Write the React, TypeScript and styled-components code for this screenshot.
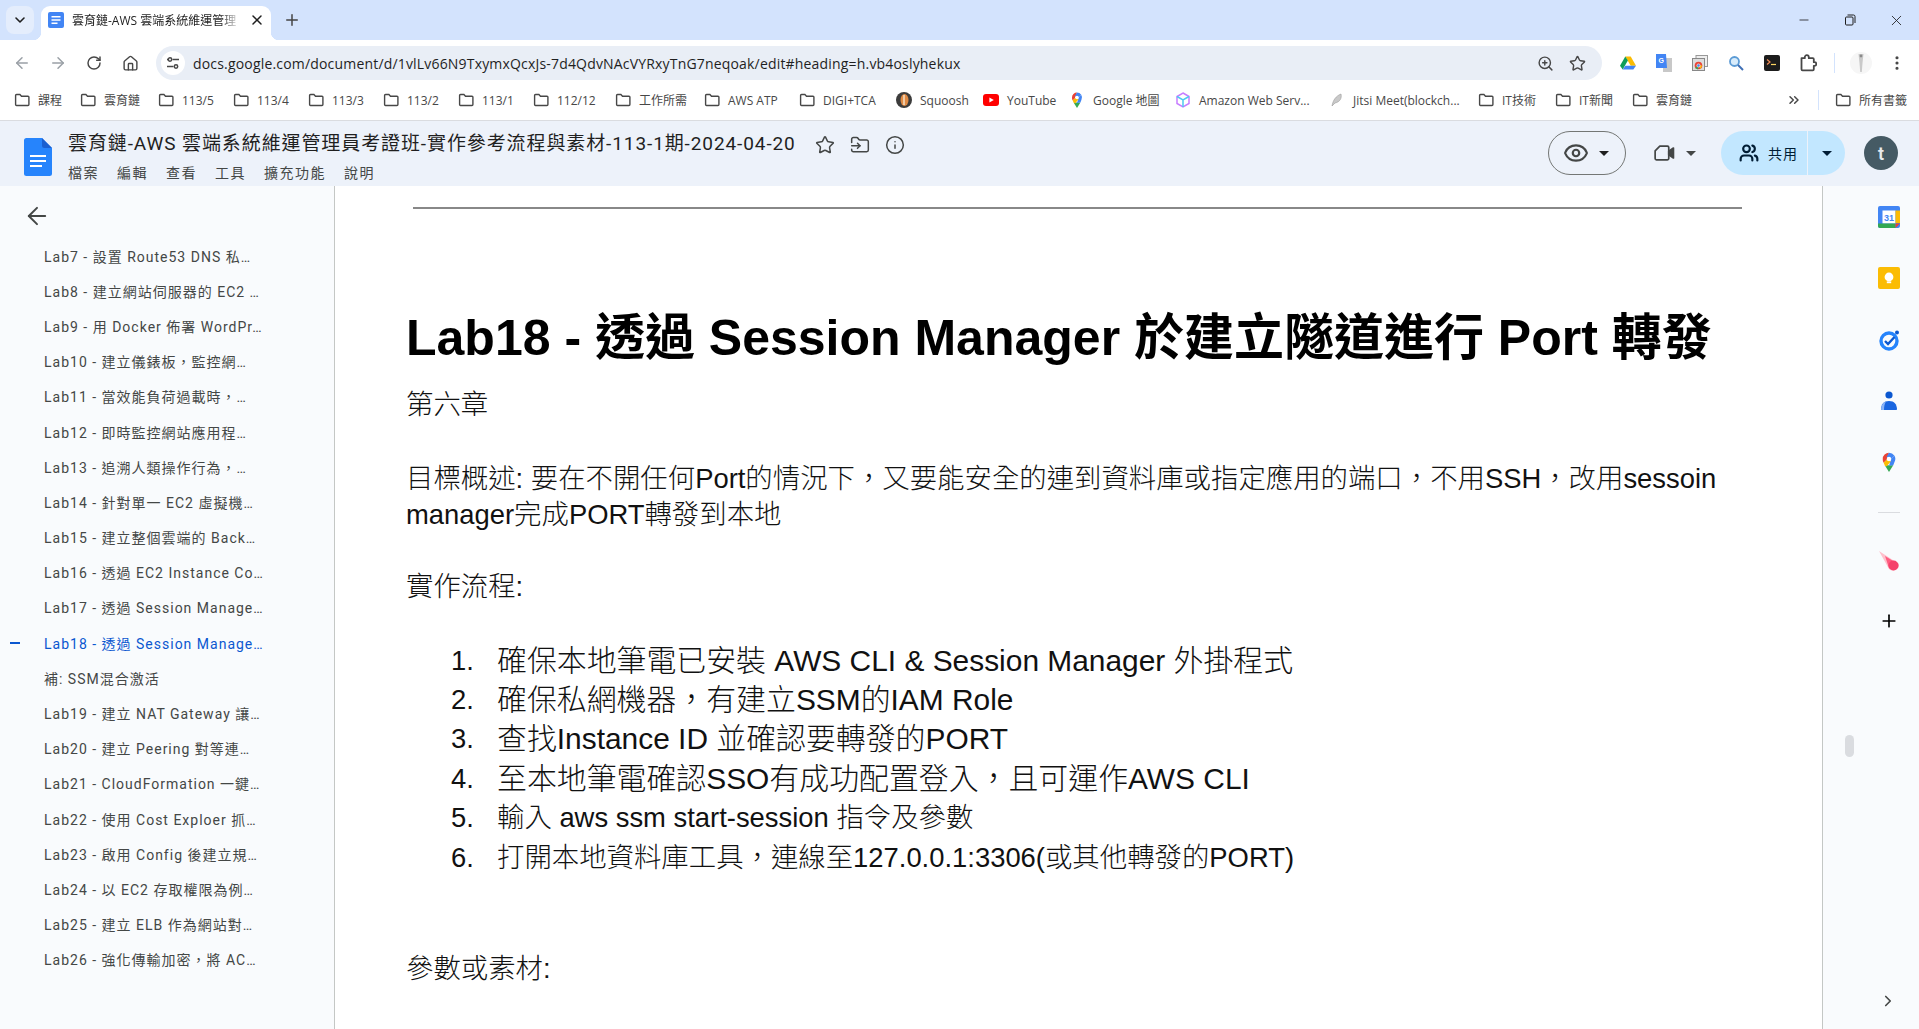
import React from "react";
import styled, { createGlobalStyle } from "styled-components";
import { ArrowLeft, ArrowRight, RotateCw, Home, Star, ZoomIn, Info, X, Plus, ChevronDown, ChevronRight, Eye, Users, Minus, EllipsisVertical, ChevronsRight, FolderInput } from "lucide-react";

const CJK = `"Noto Sans CJK TC"`;
const Global = createGlobalStyle`
  html, body { margin: 0; padding: 0; background: #fff; }
  body { font-family: "Open Sans", ${CJK}, sans-serif; color: #1f1f1f; overflow: hidden; }
  * { box-sizing: border-box; }
`;

const Page = styled.div`width: 1919px; height: 1029px; display: flex; flex-direction: column; overflow: hidden;`;
const TabStrip = styled.div`height: 40px; background: #d3e3fd; display: flex; align-items: flex-end; padding-left: 6px;`;
const TabList = styled.div`width: 28px; height: 28px; margin-bottom: 6px; background: #e4edfc; border-radius: 8px; display: flex; align-items: center; justify-content: center; color: #1f1f1f;`;
const Tab = styled.div`
  position: relative; width: 230px; height: 34px; margin-left: 7px; background: #fff; border-radius: 9px 9px 0 0;
  display: flex; align-items: center; padding: 0 6px 6px 7px; gap: 8px; font-size: 12px; white-space: nowrap;
  &::before, &::after { content: ""; position: absolute; bottom: 0; width: 8px; height: 8px; }
  &::before { left: -8px; background: radial-gradient(circle at 0 0, transparent 8px, #fff 8.5px); }
  &::after { right: -8px; background: radial-gradient(circle at 100% 0, transparent 8px, #fff 8.5px); }
`;
const TabTitle = styled.span`flex: 1; overflow: hidden; color: #1f1f1f; mask-image: linear-gradient(90deg, #000 88%, transparent);`;
const NewTab = styled.div`margin: 0 0 8px 9px; width: 24px; height: 24px; display: flex; align-items: center; justify-content: center; color: #444;`;
const WindowBtns = styled.div`margin-left: auto; display: flex; height: 40px; align-items: center;`;
const WinBtn = styled.div`width: 46px; height: 40px; display: flex; align-items: center; justify-content: center; color: #1f1f1f;`;

const Toolbar = styled.div`height: 40px; background: #fff; display: flex; align-items: flex-end; padding: 0 2px 0 4px; border-radius: 8px 8px 0 0;`;
const NavRow = styled.div`display: flex; height: 34px; align-items: center;`;
const NavBtn = styled.div<{ $dim?: boolean }>`width: 36px; height: 34px; display: flex; align-items: center; justify-content: center; color: ${p => (p.$dim ? "#9aa0a6" : "#474747")};`;
const Omnibox = styled.div`width: 1446px; height: 34px; margin-left: 8px; background: #e9eef6; border-radius: 17px; display: flex; align-items: center; padding: 0 9px 0 5px;`;
const SiteBtn = styled.div`width: 24px; height: 24px; border-radius: 50%; background: #fff; display: flex; align-items: center; justify-content: center; flex: none;`;
const Url = styled.div`flex: 1; margin-left: 8px; font-size: 14px; color: #1f1f1f; white-space: nowrap; font-family: "Open Sans", sans-serif; letter-spacing: 0.18px;`;
const OmniIcon = styled.div`width: 32px; display: flex; justify-content: center; color: #474747;`;
const Exts = styled.div`display: flex; height: 34px; align-items: center; margin-left: 8px;`;
const Ext = styled.div`width: 36px; height: 34px; display: flex; align-items: center; justify-content: center; color: #474747;`;
const ToolSep = styled.div`width: 1px; height: 20px; background: #d3e3fd; margin: 0 8px;`;

const Bookmarks = styled.div`height: 41px; background: #fff; border-bottom: 1px solid #dadce0; display: flex; align-items: center; padding: 0 12px 0 14px; font-size: 12px; color: #474747; white-space: nowrap;`;
const Mark = styled.div<{ $w: number }>`width: ${p => p.$w}px; display: flex; align-items: center; gap: 8px; flex: none; overflow: hidden;`;
const More = styled.div`margin-left: auto; display: flex; align-items: center; color: #474747;`;
const MarkSep = styled.div`width: 1px; height: 20px; background: #d3e3fd; margin: 0 16px;`;

const DocHeader = styled.div`height: 65px; background: #edf2fa; display: flex; align-items: flex-start; padding-left: 24px;`;
const DocLogo = styled.div`width: 28px; margin-top: 17px; flex: none;`;
const TitleCol = styled.div`margin-left: 16px; display: flex; flex-direction: column;`;
const TitleRow = styled.div`display: flex; align-items: center; height: 44px;`;
const DocTitle = styled.div`font-size: 19px; color: #1f1f1f; white-space: nowrap; width: 726px; letter-spacing: 0.9px; font-family: Roboto, ${CJK}, sans-serif; margin-top: -3px;`;
const TitleIcons = styled.div`display: flex; gap: 15px; margin-left: 21px; color: #444746; margin-top: 3px;`;
const Menu = styled.div`display: flex; gap: 18px; font-size: 14px; color: #444746; margin-top: -3px;`;
const MenuItem = styled.span`white-space: nowrap; letter-spacing: 1.5px;`;
const HeaderRight = styled.div`margin-left: auto; display: flex; align-items: center; height: 44px; margin-top: 10px;`;
const ModeBtn = styled.div`width: 78px; height: 44px; border: 1px solid #747775; border-radius: 22px; display: flex; align-items: center; gap: 10px; padding-left: 14px; color: #444746;`;
const Caret = styled.span<{ $c?: string }>`width: 0; height: 0; border-left: 5px solid transparent; border-right: 5px solid transparent; border-top: 5px solid ${p => p.$c || "#1f1f1f"};`;
const MeetBtn = styled.div`display: flex; align-items: center; gap: 10px; margin-left: 27px; width: 43px; color: #444746;`;
const ShareGroup = styled.div`display: flex; height: 44px; margin-left: 25px; background: #c2e7ff; border-radius: 22px; overflow: hidden; width: 124px;`;
const SharePart = styled.div`width: 87px; display: flex; align-items: center; gap: 9px; padding-left: 18px; font-size: 14px; color: #001d35; border-right: 1px solid #edf2fa; letter-spacing: 1px; white-space: nowrap;`;
const ShareCaret = styled.div`flex: 1; display: flex; align-items: center; justify-content: center;`;
const Avatar = styled.div`width: 34px; height: 34px; margin: 0 21px 0 19px; border-radius: 50%; background: #455a64; color: #e8eaed; display: flex; align-items: center; justify-content: center; font-size: 18px; font-weight: 600; font-family: Roboto, sans-serif;`;

const Main = styled.div`flex: 1; display: flex; min-height: 0;`;
const Sidebar = styled.div`width: 335px; flex: none; background: #f9fbfd; border-right: 1px solid #c4c7c5; padding-top: 16px;`;
const BackArrow = styled.div`margin-left: 23px; height: 28px; color: #444746; margin-bottom: 8px;`;
const OutlineList = styled.div`display: flex; flex-direction: column;`;
const OutlineItem = styled.div<{ $active?: boolean }>`
  height: 35.2px; display: flex; align-items: center; padding-left: 10px; font-family: Roboto, ${CJK}, sans-serif; font-size: 14px; letter-spacing: 1px; white-space: nowrap;
  color: ${p => (p.$active ? "#0b57d0" : "#444746")};
`;
const Marker = styled.span<{ $on?: boolean }>`width: 10px; height: 2px; margin-right: 24px; background: ${p => (p.$on ? "#0b57d0" : "transparent")};`;

const DocArea = styled.div`flex: 1; background: #fff; padding-left: 71px; min-width: 0;`;
const Rule = styled.div`width: 1329px; height: 2px; margin: 21px 0 0 7px; background: #888;`;
const Heading = styled.h1`margin: 98px 0 0 0; font: 700 50px/62px "Liberation Sans", ${CJK}, sans-serif; color: #000; white-space: nowrap;`;
const Para = styled.p<{ $top?: number }>`margin: ${p => p.$top ?? 0}px 0 0; width: 1340px; font: 300 27.4px/36px "Liberation Sans", ${CJK}, sans-serif; color: #111;`;
const Steps = styled.div`margin-top: 36px; display: flex; flex-direction: column;`;
const Step = styled.div<{ $big?: boolean }>`display: flex; height: 39.4px; align-items: center; font: 300 ${p => (p.$big ? "29.9px" : "27.4px")}/36px "Liberation Sans", ${CJK}, sans-serif; color: #111; white-space: nowrap;`;
const StepNum = styled.span`width: 91px; padding-left: 45px; flex: none; font-size: 27.4px;`;

const RightPanel = styled.div`position: relative; width: 97px; flex: none; background: #f9fbfd; border-left: 1px solid #c4c7c5; display: flex; flex-direction: column; align-items: center; padding: 20px 0 0 36px;`;
const SideIcon = styled.div<{ $h?: number }>`height: ${p => p.$h ?? 61}px; width: 24px; display: flex; justify-content: center; flex: none;`;
const SideRule = styled.div`width: 22px; height: 1px; background: #dadce0; margin: 0 0 37px; flex: none;`;
const Thumb = styled.div`position: absolute; left: 22px; top: 549px; width: 9px; height: 22px; background: #dadce0; border-radius: 5px;`;
const Collapse = styled.div`position: absolute; left: 56px; bottom: 19px; color: #444746; display: flex;`;

const Folder = () => (
  <svg width="16" height="16" viewBox="0 0 16 16" style={{ flex: "none" }}>
    <path d="M1.6 3.4c0-.5.4-.9.9-.9h3.4l1.6 1.7h6.5c.5 0 .9.4.9.9v7.5c0 .5-.4.9-.9.9h-11.5c-.5 0-.9-.4-.9-.9z" fill="none" stroke="#474747" strokeWidth="1.4" />
  </svg>
);
const Squoosh = () => (
  <svg width="16" height="16" viewBox="0 0 16 16" style={{ flex: "none" }}>
    <circle cx="8" cy="8" r="8" fill="#3c3c3c" /><ellipse cx="8.5" cy="8" rx="4" ry="6" fill="#e08b45" /><path d="M8 3v10" stroke="#f5e0c8" strokeWidth="1.5" />
  </svg>
);
const YouTube = () => (
  <svg width="16" height="16" viewBox="0 0 16 16" style={{ flex: "none" }}>
    <rect y="2" width="16" height="12" rx="3" fill="#f00" /><path d="M6.4 5.4 10.8 8l-4.4 2.6z" fill="#fff" />
  </svg>
);
const MapPin = ({ s = 16 }: { s?: number }) => (
  <svg width={s} height={s} viewBox="0 0 16 16" style={{ flex: "none" }}>
    <path d="M8 16 4.6 10.6 11.4 10.6z" fill="#34a853" />
    <path d="M3 5.5A5 5 0 0 1 8 .5L6 6.3 3.7 8.5A5 5 0 0 1 3 5.5z" fill="#ea4335" />
    <path d="M8 .5a5 5 0 0 1 4.2 2.3L9.5 6 6 4z" fill="#4285f4" />
    <path d="M12.2 2.8A5 5 0 0 1 12.4 8L11.4 10.6 8 11 9.5 6z" fill="#4285f4" />
    <path d="M3.7 8.5 6.5 5.8 9.4 7.6 6 11.5 4.6 10.6z" fill="#fbbc04" />
    <circle cx="8" cy="5.5" r="1.8" fill="#fff" />
  </svg>
);
const Cube = () => (
  <svg width="16" height="16" viewBox="0 0 16 16" fill="none" strokeWidth="1.5" style={{ flex: "none" }}>
    <path d="M8 1 14 4.5V11.5L8 15 2 11.5V4.5z" stroke="#c77dff" /><path d="M2 4.5 8 8 14 4.5M8 8V15" stroke="#4cc9f0" />
  </svg>
);
const Feather = () => (
  <svg width="16" height="16" viewBox="0 0 16 16" style={{ flex: "none" }}>
    <path d="M3 14C4 8 7 4 12 2c1 4-1 8-6 9z" fill="#c9c9c9" stroke="#9a9a9a" strokeWidth=".6" />
  </svg>
);
const DocGlyph = ({ w, h }: { w: number; h: number }) => (
  <svg width={w} height={h} viewBox="0 0 28 38">
    <path d="M2.5 0H18l10 10v25.5a2.5 2.5 0 0 1-2.5 2.5h-23A2.5 2.5 0 0 1 0 35.5v-33A2.5 2.5 0 0 1 2.5 0z" fill="#2684fc" />
    <path d="M18 0l10 10H20.5A2.5 2.5 0 0 1 18 7.5z" fill="#1a5fd0" />
    <path d="M6 17h16v2H6zM6 22h16v2H6zM6 27h12v2H6z" fill="#fff" />
  </svg>
);
const TabDoc = () => (
  <svg width="16" height="16" viewBox="0 0 16 16" style={{ flex: "none" }}>
    <rect width="16" height="16" rx="2" fill="#4285f4" /><path d="M3.5 4h9v1.6h-9zM3.5 7.2h9v1.6h-9zM3.5 10.4h6V12h-6z" fill="#fff" />
  </svg>
);
const Tune = () => (
  <svg width="16" height="16" viewBox="0 0 16 16" fill="none" stroke="#474747" strokeWidth="1.5">
    <circle cx="5" cy="4.5" r="1.7" /><path d="M7.5 4.5H14" /><circle cx="11" cy="11.5" r="1.7" /><path d="M2 11.5h6.5M2 4.5h1" />
  </svg>
);
const Drive = () => (
  <svg width="16" height="16" viewBox="0 0 16 16">
    <path d="M5.3 1.5h5.4L16 10.8h-5.3z" fill="#fbbc04" /><path d="M5.3 1.5 0 10.8l2.7 3.7 5.2-9z" fill="#0f9d58" /><path d="M5.4 10.8H16l-2.7 3.7H2.7z" fill="#4285f4" />
  </svg>
);
const Translate = () => (
  <svg width="16" height="18" viewBox="0 0 16 18">
    <path d="M7 4h9v14H7z" fill="#c8c8c8" /><path d="M0 0h10l1 14H0z" fill="#4285f4" /><text x="2.5" y="9" fontSize="7" fontWeight="700" fill="#fff" fontFamily="Liberation Sans">G</text>
  </svg>
);
const ChromeWindows = () => (
  <svg width="16" height="16" viewBox="0 0 16 16">
    <rect x="4" y="0.5" width="11.5" height="11" fill="#eee" stroke="#999" /><rect x="0.5" y="3.5" width="12" height="12" fill="#ddd" stroke="#888" />
    <circle cx="6.5" cy="10.5" r="3.8" fill="#ea4335" /><path d="M6.5 10.5 3 13l3 1.5z" fill="#34a853" /><path d="M6.5 10.5 10.3 10.5 8.5 14z" fill="#fbbc04" /><circle cx="6.5" cy="10.5" r="1.6" fill="#4285f4" stroke="#fff" strokeWidth=".6" />
  </svg>
);
const Lens = () => (
  <svg width="16" height="16" viewBox="0 0 16 16">
    <circle cx="6.5" cy="6.5" r="4.5" fill="#d8ecfb" stroke="#5b9bd5" strokeWidth="1.8" /><path d="M10 10l5 5" stroke="#3f6fb5" strokeWidth="2" />
  </svg>
);
const Terminal = () => (
  <svg width="16" height="16" viewBox="0 0 16 16">
    <rect width="16" height="16" rx="2" fill="#1c1c1c" /><path d="M3 4.5 6 7 3 9.5" fill="none" stroke="#f28b54" strokeWidth="1.2" /><path d="M7 9.5h5" stroke="#fdd663" strokeWidth="1.2" />
  </svg>
);
const Extension = () => (
  <svg width="18" height="18" viewBox="0 0 18 18" fill="none" stroke="#474747" strokeWidth="1.8" strokeLinejoin="round">
    <path d="M2.5 4.2h3.3V3.2a2 2 0 0 1 4 0v1h4a1 1 0 0 1 1 1v3h.7a1.8 1.8 0 0 1 0 3.6h-.7v3.5a1 1 0 0 1-1 1h-10.3a1 1 0 0 1-1-1z" />
  </svg>
);
const Videocam = () => (
  <svg width="27" height="24" viewBox="0 0 27 24" fill="none" stroke="#444746" strokeWidth="2" strokeLinejoin="round">
    <path d="M8 4h9a1.5 1.5 0 0 1 1.5 1.5v13A1.5 1.5 0 0 1 17 20H4a1.5 1.5 0 0 1-1.5-1.5V9.5z" />
    <path d="M18.5 10 24 6.2v11.6L18.5 14z" fill="#444746" />
  </svg>
);
const Profile = () => (
  <svg width="24" height="24" viewBox="0 0 24 24">
    <circle cx="12" cy="12" r="11" fill="#f6f6f6" /><path d="M9.5 3h5l-1 9-.7 9h-1.6l-.7-9z" fill="#c9c9c9" /><circle cx="12" cy="5" r="1.4" fill="#8a8a8a" />
  </svg>
);
const Calendar = () => (
  <svg width="22" height="22" viewBox="0 0 22 22">
    <rect width="22" height="22" rx="2" fill="#4285f4" /><rect x="4.5" y="4.5" width="13" height="13" fill="#fff" />
    <path d="M17.5 4.5H22V17h-4.5z" fill="#fbbc04" /><path d="M0 17.5h17.5V22H2a2 2 0 0 1-2-2z" fill="#34a853" /><path d="M17.5 17.5H22L17.5 22z" fill="#ea4335" />
    <text x="11" y="14.8" fontSize="9" fontWeight="700" fill="#4285f4" fontFamily="Liberation Sans" textAnchor="middle">31</text>
  </svg>
);
const Keep = () => (
  <svg width="22" height="22" viewBox="0 0 22 22">
    <rect width="22" height="22" rx="2" fill="#fbbc04" /><circle cx="11" cy="10" r="4.4" fill="#fff" /><rect x="8.8" y="14.4" width="4.4" height="1.8" fill="#fff" />
  </svg>
);
const Tasks = () => (
  <svg width="22" height="22" viewBox="0 0 22 22">
    <circle cx="11" cy="12" r="8" fill="none" stroke="#2684fc" strokeWidth="3.4" /><path d="M7 12l3 3 6.5-7" fill="none" stroke="#0b57d0" strokeWidth="2.4" /><circle cx="19" cy="3.5" r="2" fill="#0b57d0" />
  </svg>
);
const Contact = () => (
  <svg width="22" height="22" viewBox="0 0 22 22">
    <circle cx="11" cy="5" r="3.6" fill="#0b57d0" /><path d="M3 19c.5-5 2.5-8 8-8s7.5 3 8 8c0 .6-.5 1-1 1H4c-.5 0-1-.4-1-1z" fill="#1a66e0" /><path d="M3 19c.4-4 1.8-6.7 5-7.6-1.4 2-2 5-2 8.6H4c-.5 0-1-.4-1-1z" fill="#8ab4f8" />
  </svg>
);
const Meteor = () => (
  <svg width="22" height="22" viewBox="0 0 22 22">
    <path d="M1 1 21 14a6 6 0 0 1-10 5z" fill="#ffc0cc" /><path d="M7 6 20 14a5.4 5.4 0 0 1-9 4z" fill="#ff5c80" /><circle cx="15.5" cy="15.5" r="5" fill="#f5426b" />
  </svg>
);

const marks: [React.ReactNode, string, number][] = [
  [<Folder />, "課程", 66], [<Folder />, "雲育鏈", 78], [<Folder />, "113/5", 75], [<Folder />, "113/4", 75], [<Folder />, "113/3", 75], [<Folder />, "113/2", 75], [<Folder />, "113/1", 75], [<Folder />, "112/12", 82],
  [<Folder />, "工作所需", 89], [<Folder />, "AWS ATP", 95], [<Folder />, "DIGI+TCA", 97], [<Squoosh />, "Squoosh", 87], [<YouTube />, "YouTube", 86], [<MapPin />, "Google 地圖", 106], [<Cube />, "Amazon Web Serv...", 154], [<Feather />, "Jitsi Meet(blockch...", 149], [<Folder />, "IT技術", 77], [<Folder />, "IT新聞", 77],
  [<Folder />, "雲育鏈", 70],
];
const outline = [
  "Lab7 - 設置 Route53 DNS 私…", "Lab8 - 建立網站伺服器的 EC2 …", "Lab9 - 用 Docker 佈署 WordPr…", "Lab10 - 建立儀錶板，監控網…", "Lab11 - 當效能負荷過載時，…", "Lab12 - 即時監控網站應用程…", "Lab13 - 追溯人類操作行為，…", "Lab14 - 針對單一 EC2 虛擬機…", "Lab15 - 建立整個雲端的 Back…", "Lab16 - 透過 EC2 Instance Co…", "Lab17 - 透過 Session Manage…", "Lab18 - 透過 Session Manage…", "補: SSM混合激活", "Lab19 - 建立 NAT Gateway 讓…", "Lab20 - 建立 Peering 對等連…", "Lab21 - CloudFormation 一鍵…", "Lab22 - 使用 Cost Exploer 抓…", "Lab23 - 啟用 Config 後建立規…", "Lab24 - 以 EC2 存取權限為例…", "Lab25 - 建立 ELB 作為網站對…", "Lab26 - 強化傳輸加密，將 AC…",
];
const steps = [
  "確保本地筆電已安裝 AWS CLI & Session Manager 外掛程式",
  "確保私網機器，有建立SSM的IAM Role",
  "查找Instance ID 並確認要轉發的PORT",
  "至本地筆電確認SSO有成功配置登入，且可運作AWS CLI",
  "輸入 aws ssm start-session 指令及參數",
  "打開本地資料庫工具，連線至127.0.0.1:3306(或其他轉發的PORT)",
];

export default function App() {
  return (
    <Page lang="zh-Hant">
      <Global />
      <TabStrip>
        <TabList><ChevronDown size={16} strokeWidth={2.4} /></TabList>
        <Tab>
          <TabDoc />
          <TabTitle>雲育鏈-AWS 雲端系統維運管理</TabTitle>
          <X size={16} strokeWidth={2.2} />
        </Tab>
        <NewTab><Plus size={18} strokeWidth={2} /></NewTab>
        <WindowBtns>
          <WinBtn><Minus size={14} strokeWidth={1.4} /></WinBtn>
          <WinBtn>
            <svg width="12" height="12" viewBox="0 0 12 12" fill="none" stroke="#1f1f1f"><rect x="1.5" y="3" width="7.5" height="8" rx="1" /><path d="M3.5 1h6a1.5 1.5 0 0 1 1.5 1.5v6.5" /></svg>
          </WinBtn>
          <WinBtn><X size={17} strokeWidth={1.2} /></WinBtn>
        </WindowBtns>
      </TabStrip>
      <Toolbar>
        <NavRow>
          <NavBtn $dim><ArrowLeft size={18} /></NavBtn>
          <NavBtn $dim><ArrowRight size={18} /></NavBtn>
          <NavBtn><RotateCw size={16} strokeWidth={2.2} /></NavBtn>
          <NavBtn><Home size={17} strokeWidth={2} /></NavBtn>
        </NavRow>
        <Omnibox>
          <SiteBtn><Tune /></SiteBtn>
          <Url>docs.google.com/document/d/1vlLv66N9TxymxQcxJs-7d4QdvNAcVYRxyTnG7neqoak/edit#heading=h.vb4oslyhekux</Url>
          <OmniIcon><ZoomIn size={17} strokeWidth={2} /></OmniIcon>
          <OmniIcon><Star size={17} strokeWidth={2} /></OmniIcon>
        </Omnibox>
        <Exts>
          <Ext><Drive /></Ext>
          <Ext><Translate /></Ext>
          <Ext><ChromeWindows /></Ext>
          <Ext><Lens /></Ext>
          <Ext><Terminal /></Ext>
          <Ext><Extension /></Ext>
          <ToolSep />
          <Ext><Profile /></Ext>
          <Ext><EllipsisVertical size={18} strokeWidth={2.2} /></Ext>
        </Exts>
      </Toolbar>
      <Bookmarks>
        {marks.map(([icon, label, w], i) => (
          <Mark key={i} $w={w}>{icon}<span>{label}</span></Mark>
        ))}
        <More>
          <ChevronsRight size={16} strokeWidth={2.2} />
          <MarkSep />
          <Mark $w={72}><Folder /><span>所有書籤</span></Mark>
        </More>
      </Bookmarks>
      <DocHeader>
        <DocLogo><DocGlyph w={28} h={38} /></DocLogo>
        <TitleCol>
          <TitleRow>
            <DocTitle>雲育鏈-AWS 雲端系統維運管理員考證班-實作參考流程與素材-113-1期-2024-04-20</DocTitle>
            <TitleIcons>
              <Star size={20} strokeWidth={1.8} />
              <FolderInput size={20} strokeWidth={1.8} />
              <Info size={20} strokeWidth={1.8} />
            </TitleIcons>
          </TitleRow>
          <Menu>
            {["檔案", "編輯", "查看", "工具", "擴充功能", "說明"].map(m => <MenuItem key={m}>{m}</MenuItem>)}
          </Menu>
        </TitleCol>
        <HeaderRight>
          <ModeBtn><Eye size={26} strokeWidth={2} /><Caret /></ModeBtn>
          <MeetBtn><Videocam /><Caret $c="#444746" /></MeetBtn>
          <ShareGroup>
            <SharePart><Users size={20} strokeWidth={2.6} color="#001d35" />共用</SharePart>
            <ShareCaret><Caret $c="#001d35" /></ShareCaret>
          </ShareGroup>
          <Avatar>t</Avatar>
        </HeaderRight>
      </DocHeader>
      <Main>
        <Sidebar>
          <BackArrow><ArrowLeft size={28} strokeWidth={1.7} /></BackArrow>
          <OutlineList>
            {outline.map((t, i) => (
              <OutlineItem key={i} $active={i === 11}><Marker $on={i === 11} />{t}</OutlineItem>
            ))}
          </OutlineList>
        </Sidebar>
        <DocArea>
          <Rule />
          <Heading>Lab18 - 透過 Session Manager 於建立隧道進行 Port 轉發</Heading>
          <Para $top={18}>第六章</Para>
          <Para $top={38}>目標概述: 要在不開任何Port的情況下，又要能安全的連到資料庫或指定應用的端口，不用SSH，改用sessoin manager完成PORT轉發到本地</Para>
          <Para $top={36}>實作流程:</Para>
          <Steps>
            {steps.map((s, i) => (
              <Step key={i} $big={i < 4}><StepNum>{i + 1}.</StepNum>{s}</Step>
            ))}
          </Steps>
          <Para $top={74}>參數或素材:</Para>
        </DocArea>
        <RightPanel>
          <SideIcon><Calendar /></SideIcon>
          <SideIcon $h={62}><Keep /></SideIcon>
          <SideIcon><Tasks /></SideIcon>
          <SideIcon $h={62}><Contact /></SideIcon>
          <SideIcon $h={60}><MapPin s={20} /></SideIcon>
          <SideRule />
          <SideIcon><Meteor /></SideIcon>
          <SideIcon><Plus size={20} strokeWidth={2} color="#000" /></SideIcon>
          <Thumb />
          <Collapse><ChevronRight size={18} strokeWidth={2.2} /></Collapse>
        </RightPanel>
      </Main>
    </Page>
  );
}
